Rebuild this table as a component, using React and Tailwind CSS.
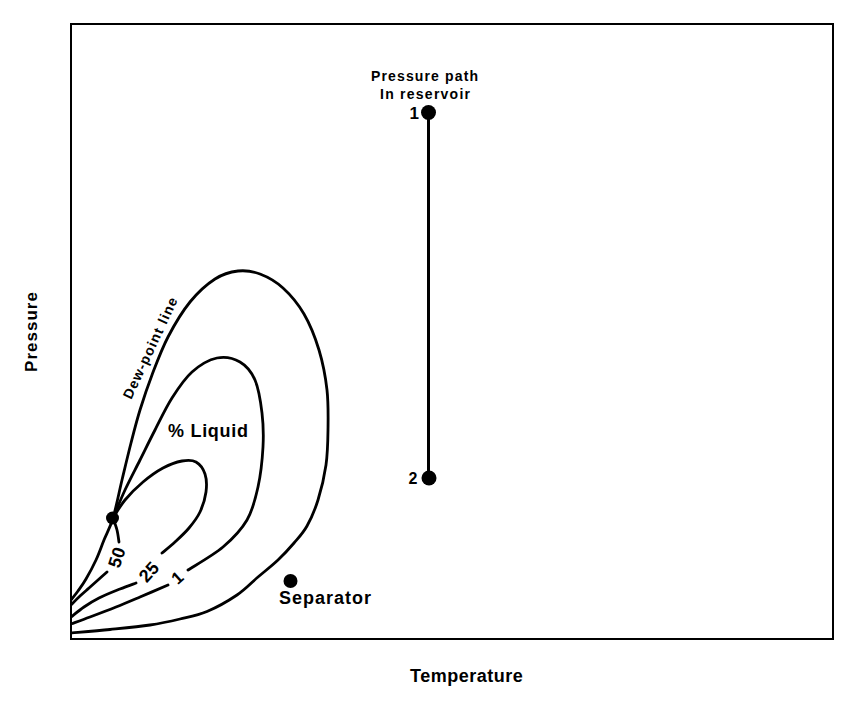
import React from "react";

function smooth(pts) {
  let d = `M${pts[0][0]},${pts[0][1]}`;
  for (let i = 0; i < pts.length - 1; i++) {
    const p0 = pts[i - 1] || pts[i];
    const p1 = pts[i];
    const p2 = pts[i + 1];
    const p3 = pts[i + 2] || p2;
    const c1x = p1[0] + (p2[0] - p0[0]) / 6;
    const c1y = p1[1] + (p2[1] - p0[1]) / 6;
    const c2x = p2[0] - (p3[0] - p1[0]) / 6;
    const c2y = p2[1] - (p3[1] - p1[1]) / 6;
    d += ` C${c1x.toFixed(2)},${c1y.toFixed(2)} ${c2x.toFixed(2)},${c2y.toFixed(2)} ${p2[0]},${p2[1]}`;
  }
  return d;
}

const outer = [
  [71, 633], [110, 629.5], [150, 625], [180, 619], [207, 611.5], [237, 595],
  [258, 577], [278, 560], [294, 543], [307, 526], [318, 500], [326, 465],
  [328, 430], [327, 390], [319, 350], [304, 314], [283, 288], [260, 274],
  [238, 271], [215, 279], [190, 302], [168, 337], [152, 375], [140, 410],
  [131, 443], [122, 480], [113, 518], [104, 540], [96, 560], [86, 579],
  [78, 591], [71, 600],
];
const mid1 = [
  [113, 518], [125, 490], [140, 460], [155, 430], [172, 398], [192, 372],
  [217, 358], [240, 362], [255, 380], [262, 413], [263, 447], [258, 487],
  [247, 520], [223, 547], [188, 570],
];
const mid2 = [[168, 585], [140, 597], [116, 607], [90, 617], [71, 624]];
const in1 = [
  [113, 518], [125, 500], [143, 482], [163, 468], [182, 461], [196, 462],
  [205, 474], [206, 492], [200, 512], [189, 528], [175, 542], [162, 553],
];
const in2 = [[136, 583], [120, 589], [99, 598], [84, 607], [71, 617]];
const f1 = [[113, 518], [117, 530], [119, 542]];
const f2 = [[107, 572], [98, 580], [89, 588], [80, 596], [71, 605]];

const FONT = "'Liberation Sans', Arial, sans-serif";

function Chart() {
  const stroke = { fill: "none", stroke: "#000", strokeWidth: 2.8, strokeLinecap: "round", strokeLinejoin: "round" };
  const txt = { fontFamily: FONT, fontWeight: 700, fill: "#000" };
  return (
    <svg width="760" height="613" viewBox="72 25 760 613" className="block">
      <path d={smooth(outer)} {...stroke} />
      <path d={smooth(mid1)} {...stroke} />
      <path d={smooth(mid2)} {...stroke} />
      <path d={smooth(in1)} {...stroke} />
      <path d={smooth(in2)} {...stroke} />
      <path d={smooth(f1)} {...stroke} />
      <path d={smooth(f2)} {...stroke} />

      <circle cx="112.5" cy="518" r="6.5" fill="#000" />
      <circle cx="290.5" cy="581" r="7" fill="#000" />

      <line x1="428.5" y1="112" x2="428.5" y2="478" stroke="#000" strokeWidth="3" />
      <circle cx="428.5" cy="112.5" r="7.5" fill="#000" />
      <circle cx="429" cy="478" r="7.5" fill="#000" />

      <text x="424.5" y="81" textAnchor="middle" fontSize="14" textLength="107" {...txt}>Pressure path</text>
      <text x="425" y="99" textAnchor="middle" fontSize="14" textLength="90" {...txt}>In reservoir</text>
      <text x="419" y="119" textAnchor="end" fontSize="17" {...txt}>1</text>
      <text x="417.5" y="483.5" textAnchor="end" fontSize="16" {...txt}>2</text>

      <text x="279" y="604" fontSize="18" textLength="92" {...txt}>Separator</text>
      <text x="168" y="437" fontSize="18" textLength="80" {...txt}>% Liquid</text>

      <text
        transform="translate(150 348) rotate(-65)"
        textAnchor="middle"
        dominantBaseline="central"
        fontSize="14"
        textLength="110"
        {...txt}
      >
        Dew-point line
      </text>
      <text transform="translate(117 557.5) rotate(-72)" textAnchor="middle" dominantBaseline="central" fontSize="18" {...txt}>50</text>
      <text transform="translate(149 572) rotate(-48)" textAnchor="middle" dominantBaseline="central" fontSize="18" {...txt}>25</text>
      <text transform="translate(177.5 578) rotate(-42)" textAnchor="middle" dominantBaseline="central" fontSize="17" {...txt}>1</text>
    </svg>
  );
}

export default function App() {
  return (
    <div className="w-[857px] h-[712px] bg-white flex flex-col text-black font-['Liberation_Sans',Arial,sans-serif]">
      <div className="flex pt-[23px]">
        <div className="w-[70px] flex items-center justify-center pr-[8px]">
          <span className="-rotate-90 text-[17px] font-bold tracking-[1px] whitespace-nowrap leading-none">Pressure</span>
        </div>
        <div className="w-[764px] h-[617px] border-2 border-black">
          <Chart />
        </div>
      </div>
      <div className="pl-[410px] pt-[27px] text-[18px] font-bold leading-none tracking-[0.5px]">Temperature</div>
    </div>
  );
}
